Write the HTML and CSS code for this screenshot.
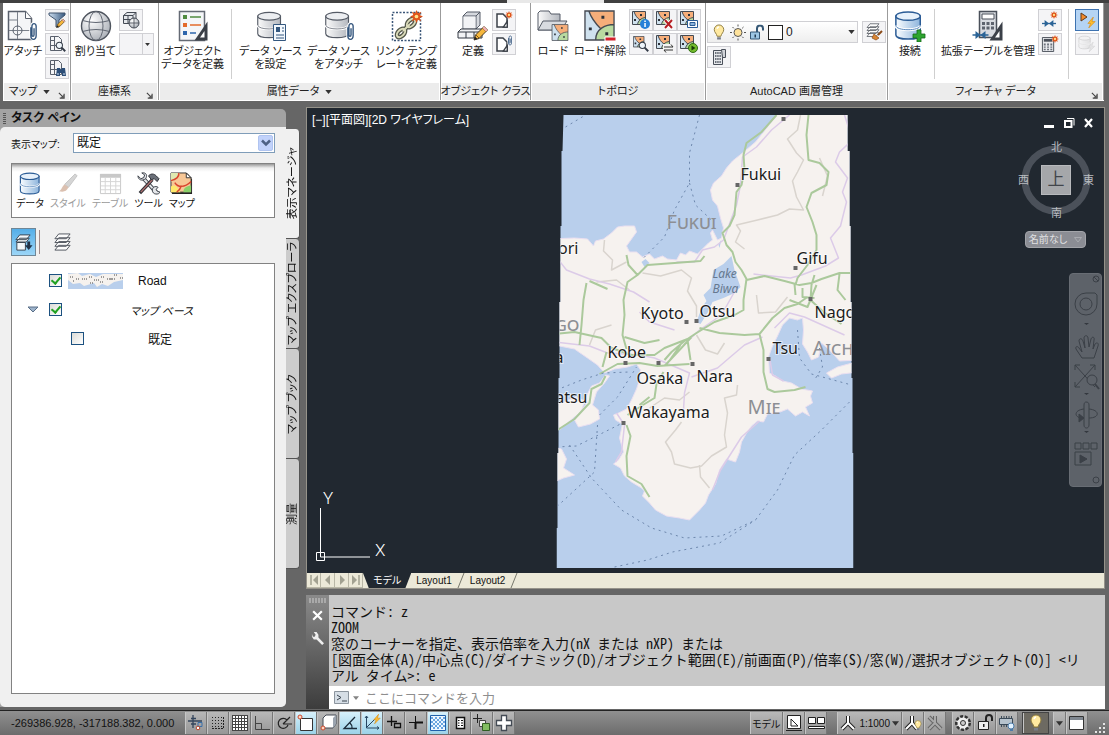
FILE: index.html
```html
<!DOCTYPE html>
<html lang="ja">
<head>
    <meta charset="UTF-8">
    <meta name="viewport" content="width=device-width, initial-scale=1.0">
    <title>AutoCAD Map</title>
    <link rel="stylesheet" href="styles.css">
</head>
<body>
    <!-- Shared icons -->
    <svg class="icon-defs" aria-hidden="true">
        <defs>
            <linearGradient id="metal" x1="0" x2="1" y1="0" y2="0">
                <stop offset="0" stop-color="#fafafa"/><stop offset="1" stop-color="#b4b8bf"/>
            </linearGradient>
            <linearGradient id="blue" x1="0" x2="1" y1="0" y2="0">
                <stop offset="0" stop-color="#fafdff"/><stop offset="1" stop-color="#8db4dc"/>
            </linearGradient>
            <linearGradient id="funnel" x1="0" x2="1" y1="0" y2="0">
                <stop offset="0" stop-color="#cfe0f2"/><stop offset="1" stop-color="#36587f"/>
            </linearGradient>
            <radialGradient id="ball" cx="0.35" cy="0.3" r="0.8">
                <stop offset="0" stop-color="#ffffff"/><stop offset="1" stop-color="#a6abb3"/>
            </radialGradient>
        </defs>

        <symbol id="doc" viewBox="0 0 32 32">
            <path d="M1.5 1.5h17l6 7v21h-23z" fill="#f4f5f7" stroke="#59606c" stroke-width="1.5"/>
            <path d="M18.5 1.5v7h6" fill="#fff" stroke="#59606c"/>
            <path d="M10.500 2v27M2 20.500h22M2 10h8" stroke="#7b818b" fill="none"/>
            <circle cx="10.500" cy="20.500" r="4.500" fill="none" stroke="#59606c"/>
        </symbol>
        <symbol id="clip" viewBox="0 0 8 18">
            <path d="M1.500 5v8a2.500 3.500 0 0 0 5 0V4a2 2.500 0 0 0-4 0v8a1 1.500 0 0 0 2 0V6" fill="none" stroke="#fff" stroke-width="3"/>
            <path d="M1.500 5v8a2.500 3.500 0 0 0 5 0V4a2 2.500 0 0 0-4 0v8a1 1.500 0 0 0 2 0V6" fill="none" stroke="#33557d" stroke-width="1.300"/>
        </symbol>
        <symbol id="pencil" viewBox="0 0 16 16">
            <path d="M1 15l1.500-5L11 1.500 14.500 5 6 13.500z" fill="#f6b73c" stroke="#4a3a22"/>
            <path d="M3 10l3 3M9.500 3l3.500 3.500" stroke="#7a5317" fill="none"/>
            <path d="M1 15l1-3.500L4.500 14z" fill="#222"/>
            <path d="M11 1.500L14.500 5l-1.500 1.500L9.500 3z" fill="#f4b2b8"/>
        </symbol>
        <symbol id="star" viewBox="0 0 12 12">
            <path d="M6 0l1.300 3 3-1.300L9 4.700 12 6 9 7.300l1.300 3-3-1.300L6 12 4.700 9l-3 1.300L3 7.300 0 6l3-1.300L1.700 1.700l3 1.300z" fill="#e0541a"/>
            <circle cx="6" cy="6" r="1.700" fill="#ffe08a"/>
        </symbol>
        <symbol id="lens" viewBox="0 0 14 14">
            <path d="M8.500 8.500l4.500 4.500" stroke="#333b47" stroke-width="2.500"/>
            <circle cx="5.500" cy="5.500" r="4" fill="#eef5fb" stroke="#333b47" stroke-width="1.300"/>
        </symbol>
        <symbol id="db" viewBox="0 0 32 32">
            <path d="M2 6v20c0 6 26 6 26 0V6z" fill="url(#metal)" stroke="#555b66" stroke-width="1.300"/>
            <path d="M2 16c0 6 26 6 26 0" fill="none" stroke="#fff" stroke-width="3"/>
            <path d="M2 16c0 6 26 6 26 0" fill="none" stroke="#707680"/>
            <ellipse cx="15" cy="6" rx="13" ry="4.500" fill="#eceef1" stroke="#555b66" stroke-width="1.300"/>
        </symbol>
        <symbol id="db-blue" viewBox="0 0 32 32">
            <path d="M2 6v20c0 6 26 6 26 0V6z" fill="url(#blue)" stroke="#2b5c96" stroke-width="1.600"/>
            <path d="M2 16c0 6 26 6 26 0" fill="none" stroke="#fff" stroke-width="3"/>
            <path d="M2 16c0 6 26 6 26 0" fill="none" stroke="#4d7fb8"/>
            <ellipse cx="15" cy="6" rx="13" ry="4.500" fill="#e7f1fb" stroke="#2b5c96" stroke-width="1.600"/>
        </symbol>
        <symbol id="topo" viewBox="0 0 32 32">
            <path d="M1 1h30v30H1z" fill="#cfe1ee"/>
            <path d="M5 1h26v14l-14 4C13 15 8 10 5 1z" fill="#f6ae7a"/>
            <path d="M31 15v16H12c0-6 3-10 6-12s8-4 13-4z" fill="#b9dba0"/>
            <path d="M5 1c3 9 8 14 12 18M31 15c-8 0-19 4-19 16M1 1h30v30H1z" fill="none" stroke="#454a52" stroke-width="1.400"/>
            <path d="M18 6h3v3h-3zM5 18h3v3H5zM22 23h3v3h-3z" fill="#2c3038"/>
        </symbol>
        <symbol id="topo-small" viewBox="0 0 16 16">
            <path d="M.5.5h13v13H.5z" fill="#cfe1ee"/>
            <path d="M2 .5h11.500v6L8 9C5 7 3 4 2 .5z" fill="#f6ae7a"/>
            <path d="M13.500 6.500v7h-8C6 10 9 7 13.500 6.500z" fill="#b9dba0"/>
            <path d="M2 .5C3 4 5 7 8 9m5.500-2.500C9 7 6 10 5.500 13.500M.5.500h13v13H.5z" fill="none" stroke="#454a52"/>
            <path d="M8 3h2v2H8zM2 8h2v2H2z" fill="#2c3038"/>
        </symbol>
        <symbol id="calc" viewBox="0 0 16 16">
            <path d="M1.500.5h12v15h-12z" fill="#e7e9ec" stroke="#4a505a"/>
            <path d="M3 2h9v3H3z" fill="#4a505a"/>
            <path d="M3 7h2v2H3zm3.500 0h2v2h-2zM10 7h2v2h-2zM3 10h2v1.500H3zm3.500 0h2v1.500h-2zM10 10h2v1.500h-2zM3 12.500h2V14H3zm3.500 0h2V14h-2zm3.500 0h2V14h-2z" fill="#6a707a"/>
        </symbol>
        <symbol id="square-rule" viewBox="0 0 14 20">
            <path d="M13.500.5v19H.5z" fill="#3b4048"/><path d="M10.500 10v6.500H6z" fill="#fff"/>
        </symbol>
        <symbol id="bulb" viewBox="0 0 16 18">
            <path d="M8 1a5 5 0 0 0-5 5c0 3 2.500 4 3 7h4c.5-3 3-4 3-7a5 5 0 0 0-5-5z" fill="#ffe9a0" stroke="#8c7a3e"/>
            <path d="M6 5a3 3 0 0 1 2-2" stroke="#fff" stroke-width="1.500" fill="none"/>
            <path d="M6 14h4v2.500H6z" fill="#777d88"/>
        </symbol>
        <symbol id="layers" viewBox="0 0 20 20">
            <path d="M6 13h12l-4 5H2zM6 9h12l-4 5H2zM6 5h12l-4 5H2zM6 1h12l-4 5H2z" fill="#fbfbfb" stroke="#50555e"/>
        </symbol>
        <symbol id="arrows" viewBox="0 0 16 8">
            <path d="M0 4h16" stroke="#2b6497" stroke-width="1.500"/><path d="M3 0l5 4-5 4zM13 0L8 4l5 4z" fill="#2b6497"/>
        </symbol>
        <symbol id="bolt" viewBox="0 0 10 12">
            <path d="M7 0L1 7h3l-2 5 7-7H5.500z" fill="#ffbf2e" stroke="#d78610" stroke-width=".7"/>
        </symbol>
        <symbol id="lock-open" viewBox="0 0 16 16">
            <path d="M8 8V4a3 3 0 0 1 6 0v2" fill="none" stroke="#345775" stroke-width="2"/>
            <path d="M1.500 7.500h9v7h-9z" fill="#9cc6e4" stroke="#345775"/><path d="M5.500 10h1.500v3H5.500z" fill="#213b52"/>
        </symbol>
        <symbol id="launcher" viewBox="0 0 8 8">
            <path d="M1 1l4 4M7 2v5H2" fill="none" stroke="#444" stroke-width="1.300"/><path d="M3 6.500L6.500 3v3.500z" fill="#444"/>
        </symbol>
        <symbol id="down" viewBox="0 0 8 5"><path d="M0 0h8L4 5z" fill="#333"/></symbol>
    </svg>

    <div class="title-strip"><span></span></div>

    <!-- Ribbon -->
    <header class="ribbon">
        <section class="panel">
            <div class="panel-body">
                <button class="big">
                    <svg viewBox="0 0 32 32"><use href="#doc" width="32" height="32"/><use href="#clip" x="22" y="12" width="9" height="19"/></svg>
                    アタッチ
                </button>
                <div class="stack">
                    <button class="small" aria-label="フィルタ"><svg viewBox="0 0 18 18"><path d="M1 2h16v2l-6 5v7H8V9L1 4z" fill="url(#funnel)" stroke="#40556f"/><use href="#pencil" x="8" y="7" width="10" height="10"/></svg></button>
                    <button class="small" aria-label="検索"><svg viewBox="0 0 18 18"><path d="M2.500 1.500h8l3 3v11h-11z" fill="#f4f5f7" stroke="#59606c"/><path d="M6.500 2v13M3 5.500h3M3 10.500h10" stroke="#59606c"/><use href="#lens" x="7" y="6" width="11" height="11"/></svg></button>
                    <button class="small" aria-label="表示"><svg viewBox="0 0 18 18"><path d="M2.500 1.500h8l3 3v11h-11z" fill="#f4f5f7" stroke="#59606c"/><path d="M6.500 2v13M3 5.500h3M3 10.500h10" stroke="#59606c"/><path d="M8 17l1-8h3l1 2 1-2h3l1 8h-4v-3h-2v3z" fill="#2c4e78"/><path d="M9.500 14h1v2h-1zM15.500 14h1v2h-1z" fill="#cfe0f2"/></svg></button>
                </div>
            </div>
            <h2>マップ <svg class="down"><use href="#down"/></svg><button class="launcher" aria-label="マップの設定"><svg><use href="#launcher"/></svg></button></h2>
        </section>

        <section class="panel">
            <div class="panel-body">
                <button class="big">
                    <svg viewBox="0 0 32 32"><circle cx="16" cy="16" r="14.500" fill="url(#ball)" stroke="#4e545e" stroke-width="1.400"/><ellipse cx="16" cy="16" rx="7" ry="14.500" fill="none" stroke="#626873"/><path d="M2.500 10.500q13.500 4 27 0M2.500 21.500q13.500-4 27 0" stroke="#626873" fill="none"/></svg>
                    割り当て
                </button>
                <div class="stack">
                    <button class="small" aria-label="座標系"><svg viewBox="0 0 18 18"><path d="M1.500 4.500L5 1.500h9v8l-3 3H1.500z" fill="#e3e6ea" stroke="#444a54"/><path d="M1.500 4.500H11l3-3M11 4.500v8M1.500 8.500H11M6 4.500v8" fill="none" stroke="#444a54"/><circle cx="12" cy="12" r="5" fill="url(#ball)" stroke="#444a54"/><path d="M7 12h10M12 7v10" stroke="#444a54" stroke-width=".8"/></svg></button>
                    <div class="mini-select"><select aria-label="座標系の選択"><option> </option></select><svg class="down"><use href="#down"/></svg></div>
                </div>
            </div>
            <h2>座標系 <button class="launcher" aria-label="座標系の設定"><svg><use href="#launcher"/></svg></button></h2>
        </section>

        <section class="panel">
            <div class="panel-body wide">
                <button class="big">
                    <svg viewBox="0 0 32 32"><path d="M2.500 1.500h25v29h-25z" fill="#f4f6f8" stroke="#646a74" stroke-width="1.500"/><path d="M6 5h4v4H6z" fill="#508b41"/><path d="M6 13h4v4H6z" fill="#e36b2c"/><path d="M6 21h4v4H6z" fill="#2e66ac"/><path d="M13 7h11" stroke="#508b41" stroke-width="1.500"/><path d="M13 15h11" stroke="#e36b2c" stroke-width="1.500"/><path d="M13 23h6" stroke="#2e66ac" stroke-width="1.500"/><use href="#square-rule" x="17" y="11" width="14" height="20"/></svg>
                    オブジェクト<br>データを定義
                </button>
                <span class="divider"></span>
                <button class="big">
                    <svg viewBox="0 0 32 32"><use href="#db" x="1" width="28" height="30"/><path d="M18.500 14.500h12v16h-12z" fill="#f3f8fd" stroke="#33577f"/><path d="M21 17h4v5h-4z" fill="#33577f"/><path d="M27 18h2M27 21h2M21 25h8M21 28h8" stroke="#33577f"/></svg>
                    データ ソース<br>を設定
                </button>
                <button class="big">
                    <svg viewBox="0 0 32 32"><use href="#db" x="1" width="28" height="30"/><use href="#clip" x="23" y="12" width="9" height="19"/></svg>
                    データ ソース<br>をアタッチ
                </button>
                <button class="big">
                    <svg viewBox="0 0 32 32"><path d="M1.500 2.500h28v28h-28z" fill="none" stroke="#3b5678" stroke-width="1.500" stroke-dasharray="2 1.500"/><g fill="none" stroke="#53574a" stroke-width="4.500"><ellipse cx="10" cy="23" rx="5" ry="3" transform="rotate(-45 10 23)"/><ellipse cx="20" cy="13" rx="5" ry="3" transform="rotate(-45 20 13)"/><path d="M12 21l7-7"/></g><g fill="none" stroke="#dcdcbb" stroke-width="2"><ellipse cx="10" cy="23" rx="5" ry="3" transform="rotate(-45 10 23)"/><ellipse cx="20" cy="13" rx="5" ry="3" transform="rotate(-45 20 13)"/><path d="M12 21l7-7"/></g><use href="#star" x="19" y="0" width="13" height="13"/></svg>
                    リンク テンプ<br>レートを定義
                </button>
            </div>
            <h2>属性データ <svg class="down"><use href="#down"/></svg></h2>
        </section>

        <section class="panel">
            <div class="panel-body tight">
                <button class="big">
                    <svg viewBox="0 0 32 32"><path d="M6 6l4-4h13v13l-4 4H6z" fill="#d5d8dd" stroke="#555b66"/><path d="M6 6h13l4-4M19 6v13" fill="none" stroke="#555b66"/><path d="M6.500 6.500h12v12h-12z" fill="#f2f3f5"/><path d="M1 22l3-3h24l-3 3v6H1z" fill="#f2f3f5" stroke="#333942"/><path d="M1 22h24M9 22v6M17 22v6" stroke="#333942"/><use href="#pencil" x="16" y="15" width="16" height="16"/></svg>
                    定義
                </button>
                <div class="stack">
                    <button class="small" aria-label="新規クラス"><svg viewBox="0 0 18 18"><path d="M2 3h6l4 4v9H2z" fill="#fff" stroke="#3b4048" stroke-width="1.500"/><use href="#square-rule" x="6" y="8" width="8" height="9"/><use href="#star" x="10" y="0" width="8" height="8"/></svg></button>
                    <button class="small" aria-label="クラスをアタッチ"><svg viewBox="0 0 18 18"><path d="M2 3h6l4 4v9H2z" fill="#fff" stroke="#3b4048" stroke-width="1.500"/><use href="#square-rule" x="6" y="8" width="8" height="9"/><use href="#clip" x="12" y="0" width="6" height="11"/></svg></button>
                </div>
            </div>
            <h2>オブジェクト クラス</h2>
        </section>

        <section class="panel">
            <div class="panel-body">
                <button class="big">
                    <svg viewBox="0 0 32 32"><path d="M1 20V3l2-2h9l2 3h9v16z" fill="url(#metal)" stroke="#555b66"/><path d="M1 20l5-9h24l-6 9z" fill="#d8dbe0" stroke="#555b66"/><use href="#topo" x="14" y="14" width="18" height="17"/></svg>
                    ロード
                </button>
                <button class="big">
                    <svg viewBox="0 0 32 32"><use href="#topo" width="31" height="31"/><path d="M21 27h11v4H21z" fill="#d3222b" stroke="#fff"/></svg>
                    ロード解除
                </button>
                <div class="icon-grid">
                    <button class="small" aria-label="情報"><svg viewBox="0 0 18 18"><use href="#topo-small" width="16" height="16"/><circle cx="13" cy="13" r="5" fill="#2580d8"/><path d="M12.300 9.500h1.500v1.500h-1.500zM12.300 12h1.500v4h-1.500z" fill="#fff"/></svg></button>
                    <button class="small" aria-label="削除"><svg viewBox="0 0 18 18"><use href="#topo-small" width="16" height="16"/><path d="M9 9l7 8M16 9l-7 8" stroke="#fff" stroke-width="4"/><path d="M9 9l7 8M16 9l-7 8" stroke="#b51f24" stroke-width="2"/></svg></button>
                    <button class="small" aria-label="形状"><svg viewBox="0 0 18 18"><use href="#topo-small" width="16" height="16"/><path d="M7.500 9.500h10v7h-10z" fill="#fff" stroke="#2b5c96"/><path d="M10 11.500h5v3h-5z" fill="#8db4dc" stroke="#2b5c96"/></svg></button>
                    <button class="small" aria-label="検索"><svg viewBox="0 0 18 18"><use href="#topo-small" x="1" y="1" width="13" height="13"/><use href="#lens" x="6" y="6" width="11" height="11"/></svg></button>
                    <button class="small" aria-label="更新"><svg viewBox="0 0 18 18"><use href="#topo-small" width="16" height="16"/><path d="M7 9h11v9H7z" fill="#f4f4f4"/><path d="M8 12h9l-2-2.500M17 15H8l2 2.500" fill="none" stroke="#333"/></svg></button>
                    <button class="small" aria-label="実行"><svg viewBox="0 0 18 18"><use href="#topo-small" width="16" height="16"/><circle cx="13" cy="13" r="4.500" fill="#74bd2d" stroke="#2f6b14"/><path d="M11.500 10.500l4 2.500-4 2.500z" fill="#173a08"/></svg></button>
                </div>
            </div>
            <h2>トポロジ</h2>
        </section>

        <section class="panel">
            <div class="panel-body layers">
                <div class="layer-row">
                    <div class="layer-select">
                        <svg viewBox="0 0 16 18"><use href="#bulb" width="16" height="18"/></svg>
                        <svg viewBox="0 0 16 16"><circle cx="8" cy="8" r="4" fill="#ffe39b" stroke="#555"/><path d="M8 0v2M8 14v2M0 8h2M14 8h2M2.500 2.500l1.300 1.300M12.200 12.200l1.300 1.300M13.500 2.500l-1.300 1.300M3.800 12.200l-1.300 1.300" stroke="#555"/></svg>
                        <svg viewBox="0 0 16 16"><use href="#lock-open" width="16" height="16"/></svg>
                        <span class="swatch"></span>
                        <select aria-label="画層"><option>0</option></select>
                        <svg class="down"><use href="#down"/></svg>
                    </div>
                    <button class="small" aria-label="画層プロパティ"><svg viewBox="0 0 18 18"><use href="#layers" width="16" height="15"/><path d="M17 8l-4 4" stroke="#8a4a18" stroke-width="2"/><path d="M9 11l5 4-3 2-4-2z" fill="#d98532" stroke="#8a4a18" stroke-width=".7"/></svg></button>
                </div>
                <button class="small" aria-label="画層計算"><svg viewBox="0 0 18 18"><path d="M3.500 2.500h9v14h-9z" fill="#e7e9ec" stroke="#4a505a"/><path d="M5 5h6M5 8h6M5 11h6M5 14h6" stroke="#6a707a" stroke-width="2" stroke-dasharray="1.500 .7"/><path d="M11.500 1.500h4v8h-3z" fill="#d0d3d8" stroke="#4a505a"/></svg></button>
            </div>
            <h2>AutoCAD 画層管理</h2>
        </section>

        <section class="panel">
            <div class="panel-body">
                <button class="big">
                    <svg viewBox="0 0 32 32"><use href="#db-blue" width="30" height="31"/><path d="M23 20h4v4h4v4h-4v4h-4v-4h-4v-4h4z" fill="#2da52f" stroke="#14691a" stroke-width=".8"/></svg>
                    接続
                </button>
                <span class="divider"></span>
                <button class="big">
                    <svg viewBox="0 0 32 32"><path d="M7.500 1.500h17v26h-17z" fill="#d8dbe0" stroke="#4a505a" stroke-width="1.500"/><path d="M10 4h12v5H10z" fill="#fff" stroke="#4a505a"/><path d="M10 12h3v3h-3zm4.500 0h3v3h-3zm4.500 0h3v3h-3zm-9 4.500h3v3h-3zm4.500 0h3v3h-3zm4.500 0h3v3h-3z" fill="#5d636d"/><use href="#arrows" x="0" y="21" width="17" height="8"/><use href="#square-rule" x="17" y="11" width="14" height="20"/></svg>
                    拡張テーブルを管理
                </button>
                <div class="stack">
                    <button class="small" aria-label="結合を作成"><svg viewBox="0 0 18 18"><use href="#arrows" x="1" y="9" width="14" height="7"/><use href="#star" x="9" y="0" width="8" height="8"/></svg></button>
                    <button class="small" aria-label="計算を作成"><svg viewBox="0 0 18 18"><use href="#calc" x="0" y="2" width="15" height="15"/><use href="#star" x="10" y="0" width="8" height="8"/></svg></button>
                </div>
                <span class="divider"></span>
                <div class="stack">
                    <button class="small on" aria-label="自動更新"><svg viewBox="0 0 18 18"><path d="M3 2l6 4-6 4z" fill="#f48a2b" stroke="#60391a"/><use href="#bolt" x="9" y="6" width="9" height="11"/></svg></button>
                    <button class="small off" aria-label="同期" disabled><svg viewBox="0 0 18 18"><use href="#db" width="14" height="15"/><use href="#bolt" x="9" y="7" width="9" height="10"/></svg></button>
                </div>
            </div>
            <h2>フィーチャ データ <button class="launcher" aria-label="フィーチャの設定"><svg><use href="#launcher"/></svg></button></h2>
        </section>
    </header>

    <main class="workspace">
        <!-- Task pane -->
        <aside class="task-pane">
            <div class="pane">
                <h1><i></i>タスク ペイン</h1>
                <div class="pane-body">
                    <div class="map-field">
                        <label for="map-name">表示マップ:</label>
                        <div class="xp-select">
                            <select id="map-name"><option>既定</option></select>
                            <span><svg viewBox="0 0 10 8"><path d="M1 1.500l4 4 4-4" fill="none" stroke="#4d6185" stroke-width="2.500"/></svg></span>
                        </div>
                    </div>
                    <div class="pane-tools">
                        <button><svg viewBox="0 0 24 24"><use href="#db-blue" x="1" width="24" height="24"/></svg>データ</button>
                        <button disabled><svg viewBox="0 0 24 24"><path d="M20 2l2 2-9 12-4-3z" fill="#999" stroke="#666"/><path d="M9 13l4 3c-2 5-6 5-10 4 3-1 3-5 6-7z" fill="#a8643c"/></svg>スタイル</button>
                        <button disabled><svg viewBox="0 0 24 24"><path d="M1.500 2.500h21v20h-21z" fill="#fff" stroke="#777"/><path d="M1 2h22v4H1z" fill="#777"/><path d="M6.500 6v16M12 6v16M17.500 6v16M2 10h20M2 14.500h20M2 18.500h20" stroke="#999"/></svg>テーブル</button>
                        <button><svg viewBox="0 0 24 24"><path d="M6 6l14 15" stroke="#3b4048" stroke-width="4"/><path d="M6 6l14 15" stroke="#e5e7ea" stroke-width="2"/><path d="M1 4l3 3 3-1 1-3-3-2c5-1 6 3 4 6-4 3-8 1-8-3zM16 19c0-3 3-5 6-3l-2 2 1 2 3 1c-1 3-8 3-8-2z" fill="#e5e7ea" stroke="#3b4048"/><path d="M3 22l13-14" stroke="#2e3036" stroke-width="3.500"/><path d="M4 21L16 8" stroke="#b07070" stroke-width="1.500"/><path d="M12 4c3-3 6-2 8 0l3 3-2 3-3-3-3 1z" fill="#6a6f78" stroke="#2a2d33"/></svg>ツール</button>
                        <button><svg viewBox="0 0 24 24"><path d="M2 2h17v5h4v16H2z" fill="#222"/><path d="M1 1h16l5 5v15H1z" fill="#f7c796" stroke="#333"/><path d="M1 1h9c-1 6-6 8-9 9z" fill="#dfe9b0"/><path d="M14 21c0-5 3-6 8-7v7z" fill="#8ad06a"/><path d="M1 15c5-3 7 2 10 6H1z" fill="#ffe96b"/><path d="M9 1c1 4-3 7-8 8m4 2c3 5 10 6 17-1M12 14c-1 3-2 5-5 7" fill="none" stroke="#d8452e" stroke-width="1.500"/><path d="M17 1v5h5z" fill="#fff" stroke="#333"/></svg>マップ</button>
                    </div>
                    <div class="view-tools">
                        <button class="on" aria-label="描画順序"><svg viewBox="0 0 20 20"><path d="M6 2h11l-4 5H2zM6 5.500h10l-3 4H2z" fill="#f4f8fb" stroke="#38424e"/><path d="M3 10h9v8H3z" fill="#f4f8fb" stroke="#38424e"/><path d="M14 9h3v4h2.500L15.500 18 11.500 13H14z" fill="#213348"/></svg></button>
                        <span></span>
                        <button aria-label="グループ"><svg viewBox="0 0 20 20"><use href="#layers" width="20" height="20"/></svg></button>
                    </div>
                    <ul class="layer-list">
                        <li>
                            <input type="checkbox" id="layer-road" checked>
                            <svg class="thumb" viewBox="0 0 55 16" preserveAspectRatio="none"><path d="M0 0h55v16H0z" fill="#b9cfec"/><path d="M0 1l10-1 4 3 8-2 6 3 7-3h20v6l-9 2-6 4-6-2-5 3-3-4-10 3-4-3-7 1-5-4z" fill="#f6f2ee"/><path d="M2 4h4m2 2h3m3 0h5m2-2h3m2 3h5m2-3h4m2 2h5m2-4h3m3 3h4M5 8h2m15 2h3m7-1h4m6-3h5" stroke="#464646" stroke-dasharray="1 1"/></svg>
                            <label for="layer-road">Road</label>
                        </li>
                        <li>
                            <button class="toggle" aria-label="折りたたむ"><svg viewBox="0 0 12 7"><path d="M1 1h10L6 6z" fill="#9db3cb" stroke="#5a6f88"/></svg></button>
                            <input type="checkbox" id="layer-base" checked>
                            <label for="layer-base" class="base">マップ ベース</label>
                        </li>
                        <li class="child">
                            <input type="checkbox" id="layer-default">
                            <label for="layer-default">既定</label>
                        </li>
                    </ul>
                </div>
            </div>
            <nav class="side-tabs">
                <button class="active"><span>表示マネージャ</span></button>
                <button><span>マップ エクスプローラ</span></button>
                <button><span>マップ ブック</span></button>
                <button><span>測量</span></button>
            </nav>
        </aside>

        <div class="editor">
            <section class="drawing-window">
                <div class="canvas">
                    <svg class="map" viewBox="556 115 300 454">
                        <defs><clipPath id="sheet"><path d="M564 115h284v36h2v75h1v76h1v76h1v75h1v115H557v-40h1v-75h1v-75h1v-76h1v-76h1v-75h1z"/></clipPath></defs>
                        <g clip-path="url(#sheet)">
                            <path class="sea" d="M550 110h310v465H550z"/>
                            <g class="land">
                                <path d="M779 113L768 127 756 142 743 153 733 161 727 168 722 176 714 183 711 190 713 200 718 206 721 218 724 228 722 238 718 240 713 230 711 233 713 240 709 243 702 250 698 254 690 251 686 255 681 253 677 260 668 259 663 256 655 259 650 254 643 257 637 252 630 252 627 246 632 239 637 232 635 226 625 226 618 227 612 233 604 239 596 241 594 246 588 239 575 238 550 239 550 344 575 349 588 358 598 365 605 373 615 369 628 367 637 364 641 370 640 380 637 389 632 400 627 409 619 413 614 415 616 420 623 424 620 438 624 452 619 460 614 464 621 468 625 476 632 482 642 488 645 491 643 496 650 503 656 510 667 516 680 518 690 520 700 510 706 503 709 495 716 484 720 470 727 459 736 462 740 452 742 442 747 433 752 426 758 421 764 422 768 414 778 413 788 409 796 416 803 412 810 416 806 407 813 403 811 396 813 391 802 389 792 383 783 381 776 376 770 373 769 357 773 346 778 336 783 325 790 318 798 320 803 318 804 330 803 344 808 352 812 360 819 357 822 343 830 350 840 361 860 360 860 110z"/>
                                <path d="M827 373L838 367 860 361 860 372 842 374 832 378zM606 375L600 383 592 386 586 398 582 411 575 420 579 427 591 424 600 419 599 410 593 405 597 392 605 383 610 376zM550 402L562 403 576 397 588 402 580 413 570 421 561 429 550 433zM550 446L562 449 567 459 564 468 575 475 564 478 557 481 550 480z"/>
                            </g>
                            <path class="sea" d="M732 256L735 270 741 287 735 293 724 298 713 302 708 313 701 324 697 322 702 308 707 301 704 295 711 288 714 270 724 264zM719 245L722 239 720 248zM646 259L650 263 645 267 642 262z"/>
                            <g class="border">
                                <path d="M801 115L798 130 788 139 797 153 804 160 798 172 793 181 797 197 804 210 790 209 778 215 758 220 737 225 741 231 736 242 745 249M605 240L604 251 613 260 612 270 627 262M643 273L661 276 682 270 692 278 688 291 697 306 697 317M757 295L759 313 776 312 788 297M697 335L706 350 718 354 725 343M650 408L665 398 680 400 690 392M738 385L737 395 725 398 728 413 725 435 727 447 712 456 702 466 691 468 675 464 672 452 666 442 676 430 682 422M700 465L701 477 710 488M630 290L617 280 597 282M820 158L828 176 823 196M590 345L596 330 612 325"/>
                            </g>
                            <g class="minor">
                                <path d="M790 115L772 130 757 147 743 157 741 185 737 205 724 240 715 247 703 250 695 262 677 262M845 115L853 140 840 152 836 162 848 178 843 192 847 202 841 226 831 238 839 258 826 266 802 275 791 278 754 274M556 256L567 270 590 279 610 284 634 292 650 302M736 290L722 315 700 330 684 345M556 342L590 346 608 353 640 355 655 358 690 373 685 393 684 410M845 335L805 317 790 313 775 328M763 337L745 345 732 356 718 368 692 377M617 413L625 425 622 452 616 462M713 490L721 470 742 437 760 421M770 357L773 375 784 381M640 312L650 322 675 330"/>
                            </g>
                            <g class="road">
                                <path d="M777 115L762 132 747 143 744 155 745 170 742 185 737 192 735 215 730 226 723 233 727 245 733 252 736 262 742 270 747 279 744 300 744 310 735 315 715 322 697 333 685 341 672 352 665 360M747 280L765 276 785 281 800 285 812 283 822 279 840 273 856 273M809 115L807 135 809 160 820 163 829 172 827 185 812 193 807 207 813 222 817 235 817 250 808 265 798 278 796 285M627 255L629 265 638 275 628 282 624 300 625 315 623 335 627 349M638 275L648 265 675 263 701 261 705 256M587 283L584 300 582 325 580 345M590 281L608 289M556 334L575 332 602 338 612 348 632 355 655 355 665 348 688 339M600 374L618 364 640 363 658 366 690 364M700 328L720 333 745 335 760 334 773 318 785 308 798 304 808 297M760 334L764 350 764 372 768 389 775 392 795 390 806 387M664 372L657 384 655 398 645 404 628 415M627 425L631 436 627 456 628 476 642 484 650 497M606 376L602 384 592 389 590 403 575 419 558 430M815 275L812 285 811 300 824 312 842 324M840 274L838 290 846 300M803 288L803 297 815 298M795 284L796 295M665 366L680 350 692 337M681 345L669 362M688 340L691 360M625 337L645 343 660 340M607 352L603 367M650 397L640 405M790 300L808 307 817 285"/>
                            </g>
                            <path class="ferry" d="M700 115L690 153V183L675 210 665 237 642 260M690 183L696 205 712 220M566 127L586 115M557 390L582 380 604 373 630 372M557 447L577 446 599 435 623 423M598 425L595 472 557 507M600 415L618 397 637 367M570 445L592 478 622 510 652 528 685 538 722 536 756 520 778 490 795 455 822 430 850 402M615 567L648 560 673 552 720 543 756 520M798 330L800 358 812 374 852 385M820 348L823 367 815 380"/>
                            <path class="town" d="M736 183h4v4h-4zM782 117h4v4h-4zM794 266h4v4h-4zM685 320h4v4h-4zM695 319h4v4h-4zM809 297h4v4h-4zM624 361h4v4h-4zM657 361h4v4h-4zM691 362h4v4h-4zM767 357h4v4h-4zM622 421h4v4h-4z"/>
                            <g class="prefecture">
                                <text x="667" y="229">Fukui</text><text x="748" y="414">Mie</text>
                                <text x="813" y="355">Aichi</text><text x="580" y="331" text-anchor="end">Hyogo</text>
                            </g>
                            <g class="city">
                                <text x="741" y="180">Fukui</text><text x="797" y="264">Gifu</text>
                                <text x="641" y="319">Kyoto</text><text x="700" y="317">Otsu</text>
                                <text x="815" y="318">Nagoya</text><text x="608" y="358">Kobe</text>
                                <text x="773" y="354">Tsu</text><text x="637" y="384">Osaka</text>
                                <text x="697" y="382">Nara</text><text x="628" y="418">Wakayama</text>
                                <text x="579" y="254" text-anchor="end">Tottori</text>
                                <text x="588" y="403" text-anchor="end">Takamatsu</text>
                                <text x="564" y="363" text-anchor="end">Okayama</text>
                            </g>
                            <g class="lake"><text x="713" y="278">Lake</text><text x="713" y="293">Biwa</text></g>
                        </g>
                    </svg>
                    <p class="view-label">[−][平面図][2D ワイヤフレーム]</p>
                    <div class="window-buttons">
                        <button aria-label="最小化"><svg viewBox="0 0 12 12"><path d="M1 8h10v3H1z" fill="#fff"/></svg></button>
                        <button aria-label="元に戻す"><svg viewBox="0 0 12 12"><path d="M4 1.500h7v7" fill="none" stroke="#fff"/><path d="M2 4h6.500v6H2z" fill="none" stroke="#fff" stroke-width="2"/></svg></button>
                        <button aria-label="閉じる"><svg viewBox="0 0 12 12"><path d="M2 2l7 8M9 2l-7 8" stroke="#fff" stroke-width="2.200"/></svg></button>
                    </div>
                    <div class="compass">
                        <svg viewBox="0 0 80 80"><circle cx="40" cy="40" r="31" fill="none" stroke="#4b515a" stroke-width="7"/></svg>
                        <span class="north">北</span><span class="east">東</span><span class="south">南</span><span class="west">西</span>
                        <button>上</button>
                    </div>
                    <button class="ucs-name">名前なし <svg viewBox="0 0 8 6"><path d="M.5.5h7L4 5z" fill="none" stroke="#a9abb0"/></svg></button>
                    <div class="nav-bar">
                        <svg viewBox="0 0 31 212">
                            <g fill="none" stroke="#3b4047">
                                <circle cx="26" cy="5" r="3"/><path d="M24 3l4 4"/>
                                <path d="M16 19a11 11 0 1 0 11 11v-9l-2-2z"/><circle cx="16" cy="30" r="6"/>
                                <path d="M12 84l-6-9c-1-3 2-3 3-1l3 4-3-11c0-3 3-3 4 0l2 7-1-10c0-3 4-3 4 0l1 9 2-8c1-3 4-2 3 1l-1 9 2-5c2-2 4-1 3 2l-4 12z"/>
                                <path d="M5 91l20 22M25 91L5 113M5 96v-5h5M20 91h5v5M5 108v5h5"/><circle cx="22" cy="106" r="5" fill="#5d6269"/><path d="M25 110l4 5" stroke-width="2"/>
                                <path d="M16 128c2 0 3 1 3 3v20c0 4-5 4-5 0v-20c0-2 1-3 2-3zM19 135c11 1 11 9 0 9M14 135c-10 1-10 8-3 9"/><path d="M9 140l5 4-5 4z" fill="#3b4047"/>
                                <path d="M5 169h6v6H5zM13 169h6v6h-6zM21 169h6v6h-6zM5 178h16v13H5z"/><path d="M10 181l7 4-7 4z" fill="#3b4047"/>
                                <circle cx="26" cy="206" r="3"/>
                            </g>
                            <path d="M14 49h5l-2.500 2zM14 119h5l-2.500 2zM14 157h5l-2.500 2z" fill="#34383f"/>
                        </svg>
                    </div>
                    <svg class="ucs-icon" viewBox="0 0 80 76"><path d="M6.500 19v49H56M2.500 63.500h8v8h-8z" fill="none" stroke="#fff"/><text x="9" y="15">Y</text><text x="61" y="67">X</text></svg>
                </div>
                <nav class="layout-tabs">
                    <button class="step" aria-label="最初"><svg viewBox="0 0 10 10"><path d="M2 0v10" stroke="#a2a191" stroke-width="1.500"/><path d="M9 0v10L4 5z" fill="#a2a191"/></svg></button>
                    <button class="step" aria-label="前"><svg viewBox="0 0 10 10"><path d="M7 0v10L2 5z" fill="#a2a191"/></svg></button>
                    <button class="step" aria-label="次"><svg viewBox="0 0 10 10"><path d="M3 0v10l5-5z" fill="#a2a191"/></svg></button>
                    <button class="step" aria-label="最後"><svg viewBox="0 0 10 10"><path d="M1 0v10l5-5z" fill="#a2a191"/><path d="M8 0v10" stroke="#a2a191" stroke-width="1.500"/></svg></button>
                    <button class="sheet active">モデル</button>
                    <button class="sheet">Layout1</button>
                    <svg class="slant" viewBox="0 0 8 15"><path d="M7 0L1 15" stroke="#77776c"/></svg>
                    <button class="sheet">Layout2</button>
                    <svg class="slant" viewBox="0 0 8 15"><path d="M7 0L1 15" stroke="#77776c"/></svg>
                </nav>
            </section>

            <section class="command">
                <div class="command-side">
                    <i></i>
                    <button aria-label="閉じる"><svg viewBox="0 0 12 12"><path d="M2 2l8 8M10 2l-8 8" stroke="#fff" stroke-width="2"/></svg></button>
                    <button aria-label="カスタマイズ"><svg viewBox="0 0 14 14"><path d="M1 2v3l2 3h3l6 6 2-2-6-6V3L6 0H3l2 3-1 2H2z" fill="#eee"/></svg></button>
                </div>
                <div class="command-main">
                    <div class="history">
                        <p>コマンド: z</p>
                        <p>ZOOM</p>
                        <p>窓のコーナーを指定、表示倍率を入力(nX または nXP) または</p>
                        <p>[図面全体(A)/中心点(C)/ダイナミック(D)/オブジェクト範囲(E)/前画面(P)/倍率(S)/窓(W)/選択オブジェクト(O)] &lt;リ</p>
                        <p>アル タイム&gt;: e</p>
                    </div>
                    <div class="prompt">
                        <button aria-label="最近使用したコマンド"><svg viewBox="0 0 16 13"><path d="M.5.5h14v12H.5z" fill="#d6dee6" stroke="#8c959e"/><path d="M3 4l4 2.500L3 9M8 10h5" fill="none" stroke="#39434d"/></svg><svg class="down"><use href="#down"/></svg></button>
                        <input type="text" aria-label="コマンド" placeholder="ここにコマンドを入力">
                    </div>
                </div>
            </section>
        </div>
    </main>

    <!-- Status bar -->
    <footer class="status">
        <span class="coords">-269386.928, -317188.382, 0.000</span>
        <div class="status-group">
            <button aria-label="推定"><svg viewBox="0 0 18 18"><path d="M6 1v13M1 7h14M4 4.500h5M4 10h5" stroke="#34455c" stroke-width="1.300"/><path d="M11 8.500h4v4h-4z" fill="none" stroke="#3a6fa8"/><circle cx="11" cy="14" r="1.800" fill="#fff" stroke="#b9462c"/></svg></button>
            <button aria-label="スナップ"><svg viewBox="0 0 18 18"><path d="M3 3.500h12M3 6.500h12M3 9.500h12M3 12.500h12" stroke="#222" stroke-dasharray="1 2"/><path d="M14.500 3v12M3 14.500h12" stroke="#222" stroke-dasharray="2 1"/></svg></button>
            <button aria-label="グリッド"><svg viewBox="0 0 18 18"><path d="M1.500 1.500h15v15h-15z" fill="#fff"/><path d="M1.500 1v16M4.500 1v16M7.500 1v16M10.500 1v16M13.500 1v16M16.500 1v16M1 1.500h16M1 4.500h16M1 7.500h16M1 10.500h16M1 13.500h16M1 16.500h16" stroke="#444"/></svg></button>
            <button aria-label="直交"><svg viewBox="0 0 18 18"><path d="M2.500 2v13.500H17M2.500 9.500h6v6" fill="none" stroke="#444"/></svg></button>
            <button aria-label="極"><svg viewBox="0 0 18 18"><path d="M13 11a5 5 0 1 1-1-5M8 10h9M8 10l7-7" fill="none" stroke="#222" stroke-width="1.200"/></svg></button>
            <button class="on" aria-label="オブジェクト スナップ"><svg viewBox="0 0 18 18"><path d="M3.500 4.500h12v12h-12z" fill="#fff" stroke="#333"/><circle cx="3" cy="3" r="2" fill="#ffd8c4" stroke="#c9482d"/></svg></button>
            <button aria-label="3D スナップ"><svg viewBox="0 0 18 18"><path d="M4 4l3-3h10v9l-3 4H4z" fill="#fff" stroke="#444b55"/><path d="M14 4l3-3v9l-3 4z" fill="#9ba4af"/><circle cx="4" cy="14" r="2" fill="#ffd8c4" stroke="#c9482d"/></svg></button>
            <button class="on" aria-label="トラッキング"><svg viewBox="0 0 18 18"><path d="M14 3L3 14.500h13M9 9a6 6 0 0 1 2 5" fill="none" stroke="#1c2c3a" stroke-width="1.300"/></svg></button>
            <button class="on" aria-label="ダイナミック UCS"><svg viewBox="0 0 18 18"><path d="M3.500 2v12H16M3 14L13 4M2 4l1.500-2L5 4M14 12.500l2 1.500-2 1.500" fill="none" stroke="#274661"/><use href="#bolt" x="10" y="0" width="8" height="10"/></svg></button>
            <button aria-label="ダイナミック入力"><svg viewBox="0 0 18 18"><path d="M6.500 2v10M2 7.500h10M9.500 9.500h6v4h-6z" fill="none" stroke="#111" stroke-width="1.300"/></svg></button>
            <button aria-label="線の太さ"><svg viewBox="0 0 18 18"><path d="M2 8.500h7M8.500 2v6" stroke="#111"/><path d="M8.500 8v7M8 8.500h8" stroke="#111" stroke-width="2"/></svg></button>
            <button class="on" aria-label="透過性"><svg viewBox="0 0 18 18"><path d="M1.500 1.500h15v15h-15z" fill="#edf7ff" stroke="#1f60aa"/><path d="M2 4h14M2 8h14M2 12h14" stroke="#69a5df" stroke-width="2" stroke-dasharray="2 2"/><path d="M4 6h12M4 10h12M4 14h12" stroke="#69a5df" stroke-width="2" stroke-dasharray="2 2"/></svg></button>
            <button aria-label="クイック プロパティ"><svg viewBox="0 0 18 18"><path d="M5.500 3.500h8v11h-8z" fill="#fff" stroke="#111" stroke-width="1.500"/><path d="M7 6.500h1.500M10 6.500h2M7 9h1.500M10 9h2M7 11.500h1.500M10 11.500h2" stroke="#111"/></svg></button>
            <button aria-label="選択の循環"><svg viewBox="0 0 18 18"><path d="M4.500 0v9M0 4.500h9" stroke="#222"/><path d="M6.500 6.500h6v6h-6z" fill="#eee" stroke="#444"/><path d="M9.500 9.500h7v7h-7z" fill="#82bd61" stroke="#315f22"/></svg></button>
            <button aria-label="注釈モニター"><svg viewBox="0 0 18 18"><path d="M6.500 1.500h5v5h5v5h-5v5h-5v-5h-5v-5h5z" fill="#fff" stroke="#444b55" stroke-width="1.300"/></svg></button>
        </div>
        <div class="status-right">
            <div class="status-group">
                <button class="text">モデル</button>
                <button aria-label="レイアウト"><svg viewBox="0 0 18 18"><path d="M2.500 1.500h13v13h-13zM1 16.500h16" fill="#fff" stroke="#222"/><path d="M6 5v7h7z" fill="none" stroke="#222"/></svg></button>
                <button aria-label="クイックビュー"><svg viewBox="0 0 18 18"><path d="M1.500 3.500h7v6h-7zM10.500 3.500h7v6h-7zM1.500 12.500h16v2h-16z" fill="#fff" stroke="#222"/></svg></button>
            </div>
            <div class="status-group scale">
                <button class="text"><svg viewBox="0 0 18 18"><path d="M9 2v7l-6 6M9 9l6 6" fill="none" stroke="#222" stroke-width="4"/><path d="M9 2v7l-6 6M9 9l6 6" fill="none" stroke="#fff" stroke-width="2"/></svg>1:1000<svg class="down"><use href="#down"/></svg></button>
                <button aria-label="注釈の表示"><svg viewBox="0 0 18 18"><path d="M8 2v7l-6 6M8 9l5 6" fill="none" stroke="#222" stroke-width="4"/><path d="M8 2v7l-6 6M8 9l5 6" fill="none" stroke="#fff" stroke-width="2"/><use href="#bulb" x="9" y="6" width="10" height="11"/></svg></button>
                <button aria-label="自動追加"><svg viewBox="0 0 18 18"><path d="M9 2v7l-6 6M9 9l6 6M3 3l5 5" fill="none" stroke="#666" stroke-width="4"/><path d="M9 2v7l-6 6M9 9l6 6M3 3l5 5" fill="none" stroke="#aaa" stroke-width="2"/></svg></button>
            </div>
            <div class="status-group">
                <button aria-label="ワークスペース"><svg viewBox="0 0 18 18"><circle cx="9" cy="9" r="6.500" fill="#eee" stroke="#333" stroke-width="3" stroke-dasharray="3 1.500"/><circle cx="9" cy="9" r="5.500" fill="#eee"/><circle cx="9" cy="9" r="2.500" fill="#ccc" stroke="#333"/></svg></button>
                <button aria-label="ロック"><svg viewBox="0 0 18 18"><path d="M10 8V4a3 3 0 0 1 6 0v3" fill="none" stroke="#222" stroke-width="2"/><path d="M2.500 7.500h10v8h-10z" fill="#eee" stroke="#222"/><path d="M7 10h1.500v3H7z" fill="#222"/></svg></button>
                <button aria-label="ハードウェア"><svg viewBox="0 0 18 18"><path d="M1.500 4.500h13v6h-13z" fill="#b7c3cd" stroke="#3b4a58"/><path d="M3 3h11M3 12h8" stroke="#3b4a58" stroke-width="2" stroke-dasharray="1 1.500"/><circle cx="13" cy="12" r="3" fill="#e2f2ff" stroke="#4c7ba8"/><path d="M12 16h3" stroke="#4c7ba8" stroke-width="2"/></svg></button>
                <button class="pressed" aria-label="オブジェクト選択表示"><svg viewBox="0 0 18 18"><use href="#bulb" x="1" width="16" height="18"/></svg></button>
                <button class="narrow" aria-label="メニュー"><svg class="down"><use href="#down"/></svg></button>
                <button aria-label="全画面"><svg viewBox="0 0 18 18"><path d="M1.500 2.500h14v13h-14z" fill="#fff" stroke="#333"/><path d="M2 3h13v3H2z" fill="#7f8790"/></svg></button>
            </div>
            <svg class="grip" viewBox="0 0 12 12"><path d="M9 1h2v2H9zM5 5h2v2H5zM9 5h2v2H9zM1 9h2v2H1zM5 9h2v2H5zM9 9h2v2H9z" fill="#e5e5e5"/></svg>
        </div>
    </footer>
</body>
</html>
```

FILE: styles.css
```css
* {
    box-sizing: border-box;
}
body {
    margin: 0;
    height: 100vh;
    display: flex;
    flex-direction: column;
    overflow: hidden;
    background: #666;
    color: #222;
    font-family: "Liberation Sans", "Noto Sans CJK JP", sans-serif;
    font-size: 11px;
    font-feature-settings: "palt";
}
button, select, input {
    font: inherit;
    font-feature-settings: inherit;
    color: inherit;
    margin: 0;
    padding: 0;
    border: 0;
    background: none;
}
h1, h2, p, ul {
    margin: 0;
    padding: 0;
    font-weight: normal;
}
svg {
    display: block;
    flex: none;
}
select {
    appearance: none;
}
.icon-defs {
    position: absolute;
    width: 0;
    height: 0;
}
.down {
    width: 7px;
    height: 4px;
}

/* Ribbon */
.title-strip {
    height: 3px;
    background: #404040;
    display: grid;
    grid-template-columns: 507fr 97fr 505fr;
}
.title-strip span {
    grid-column: 2;
    background: #e8e8e8;
}
.ribbon {
    display: grid;
    grid-template-columns: 68fr 88fr 282fr 90fr 175fr 182fr 216fr;
    margin: 0 5px 4px 3px;
    background: #fff;
    border-bottom: 1px solid #fff;
}
.panel {
    min-width: 0;
    border-right: 1px solid #9b9b9b;
    display: flex;
    flex-direction: column;
}
.panel-body {
    flex: 1;
    display: flex;
    justify-content: center;
    gap: 3px;
    padding: 6px 1px 4px;
    min-height: 80px;
}
.panel h2 {
    position: relative;
    display: flex;
    align-items: center;
    justify-content: center;
    gap: 6px;
    height: 17px;
    margin: 0 1px;
    font-size: 11px;
    line-height: 15px;
    white-space: nowrap;
    background: #ececec;
}
.panel:first-child h2 {
    padding-right: 14px;
}
.launcher {
    position: absolute;
    right: 4px;
    bottom: 1px;
}
.launcher svg {
    width: 7px;
    height: 7px;
}
.big {
    display: flex;
    flex-direction: column;
    align-items: center;
    text-align: center;
    line-height: 13px;
    white-space: nowrap;
    min-width: 36px;
}
.big svg {
    width: 32px;
    height: 32px;
    margin: 1px 0 3px;
}
.wide .big {
    flex: 1;
}
.tight {
    gap: 1px;
}
.stack {
    display: flex;
    flex-direction: column;
    align-items: flex-start;
    gap: 2px;
}
.small {
    display: grid;
    place-items: center;
    width: 24px;
    height: 22px;
    border: 1px solid #d0d0d4;
    background: #f4f4f6;
}
.small svg {
    width: 18px;
    height: 18px;
}
.small.on {
    background: #b5d4f4;
    border-color: #3d72b0;
}
.small.off svg {
    opacity: 0.3;
    filter: grayscale(1);
}
.divider {
    width: 1px;
    margin: 0 3px;
    background: #cfcfcf;
}
.mini-select {
    display: flex;
    align-items: center;
    position: relative;
    width: 35px;
    height: 22px;
    border: 1px solid #d0d0d4;
    background: linear-gradient(90deg, #f4f4f6 22px, #d0d0d4 22px 23px, #f4f4f6 23px);
}
.mini-select select {
    width: 100%;
    height: 100%;
}
.mini-select .down {
    position: absolute;
    right: 3px;
    width: 5px;
    height: 3px;
}
.icon-grid {
    display: grid;
    grid-template-columns: repeat(3, 24px);
    grid-auto-rows: 22px;
    gap: 2px 0;
}
.panel-body.layers {
    flex-direction: column;
    justify-content: flex-start;
    padding: 18px 1px 4px;
}
.layer-row {
    display: flex;
    gap: 4px;
}
.layer-select {
    position: relative;
    flex: 1;
    display: flex;
    align-items: center;
    gap: 3px;
    padding-left: 3px;
    height: 22px;
    border: 1px solid #d0d0d4;
    background: linear-gradient(#fff, #eee);
}
.layer-select svg {
    width: 16px;
    height: 17px;
}
.layer-select .down {
    position: absolute;
    right: 2px;
    width: 7px;
    height: 4px;
}
.layer-select select {
    flex: 1;
    height: 18px;
    font-size: 12px;
}
.swatch {
    width: 15px;
    height: 15px;
    border: 1px solid #222;
    background: #fff;
}

/* Task pane */
.workspace {
    flex: 1;
    min-height: 0;
    display: flex;
}
.task-pane {
    display: flex;
    width: 300px;
    padding: 4px 0 3px;
}
.pane {
    flex: 1;
    display: flex;
    flex-direction: column;
    background: #a3a3a3;
    border-radius: 0 5px 5px 0;
}
.pane h1 {
    display: flex;
    align-items: center;
    gap: 5px;
    padding-left: 3px;
    font-size: 12px;
    line-height: 18px;
    font-weight: bold;
    color: #111;
}
.pane h1 i {
    width: 3px;
    height: 11px;
    background: repeating-linear-gradient(#555 0 1px, transparent 1px 2px);
}
.pane-body {
    flex: 1;
    display: flex;
    flex-direction: column;
    padding: 6px 11px 13px;
    background: #f0f0f0;
    border-radius: 5px 0 5px 5px;
    color: #111;
}
.map-field {
    display: flex;
    align-items: center;
    justify-content: space-between;
}
.map-field label {
    font-size: 10px;
}
.xp-select {
    position: relative;
    width: 202px;
    height: 20px;
    border: 1px solid #7f9db9;
    background: #fff;
}
.xp-select select {
    width: 100%;
    height: 18px;
    padding-left: 3px;
    font-size: 12px;
}
.xp-select span {
    position: absolute;
    right: 1px;
    top: 1px;
    display: grid;
    place-items: center;
    width: 15px;
    height: 16px;
    background: #c1d2fb;
    border: 1px solid #b0c4f0;
    border-radius: 2px;
    pointer-events: none;
}
.xp-select svg {
    width: 10px;
    height: 8px;
}
.pane-tools {
    display: flex;
    gap: 6px;
    height: 55px;
    margin-top: 10px;
    padding: 8px 4px 0;
    border: 1px solid #828282;
    background: linear-gradient(#999, #eee 4px, #fff 8px);
}
.pane-tools button {
    display: flex;
    flex-direction: column;
    align-items: center;
    gap: 2px;
    line-height: 13px;
    font-size: 10px;
}
.pane-tools button:disabled {
    color: #9a9a9a;
}
.pane-tools svg {
    width: 23px;
    height: 23px;
}
.pane-tools button:disabled svg {
    opacity: 0.4;
}
.view-tools {
    display: flex;
    align-items: center;
    gap: 3px;
    margin-top: 10px;
}
.view-tools span {
    width: 1px;
    height: 24px;
    margin-right: 7px;
    background: #a08c8c;
}
.view-tools button {
    display: grid;
    place-items: center;
    width: 25px;
    height: 28px;
}
.view-tools button.on {
    background: linear-gradient(#55aee8, #9bd5f7);
    border: 1px solid #6f8696;
}
.view-tools svg {
    width: 19px;
    height: 19px;
}
.layer-list {
    flex: 1;
    margin-top: 7px;
    padding-top: 2px;
    list-style: none;
    background: #fff;
    border: 1px solid #828282;
}
.layer-list li {
    display: grid;
    grid-template-columns: 22px 14px 57px 66px;
    column-gap: 5px;
    align-items: center;
    height: 29px;
    padding-left: 10px;
    font-size: 12px;
}
.layer-list input {
    appearance: none;
    grid-column: 2;
    width: 13px;
    height: 13px;
    background: linear-gradient(135deg, #dcdcd7, #fff);
    border: 1px solid #1c5180;
}
.layer-list input:checked::after {
    content: "";
    display: block;
    width: 4px;
    height: 7px;
    margin: 0 auto;
    border: solid #21a121;
    border-width: 0 2px 2px 0;
    transform: rotate(40deg);
}
.layer-list label {
    grid-column: 4;
    padding-left: 8px;
}
.layer-list .base {
    padding-left: 0;
    font-size: 11px;
    font-style: italic;
    white-space: nowrap;
}
.layer-list .child {
    grid-template-columns: 44px 14px 35px 66px;
}
.layer-list .child label {
    padding-left: 18px;
}
.toggle {
    padding-left: 5px;
}
.toggle svg {
    width: 12px;
    height: 7px;
}
.thumb {
    width: 55px;
    height: 16px;
}
.side-tabs {
    width: 14px;
    height: 440px;
    margin-top: 20px;
    display: grid;
    grid-auto-rows: 1fr;
}
.side-tabs button {
    background: #ccc;
    border: solid #555;
    border-width: 0 1px 1px 0;
    border-radius: 0 4px 4px 0;
    font-size: 11px;
    color: #111;
}
.side-tabs button.active {
    background: #f0f0f0;
}
.side-tabs span {
    display: block;
    writing-mode: vertical-rl;
    text-orientation: sideways;
    transform: rotate(180deg);
    line-height: 13px;
    margin: auto;
    white-space: nowrap;
}

/* Drawing window */
.editor {
    flex: 1;
    min-width: 0;
    display: flex;
    flex-direction: column;
    gap: 6px;
    padding: 2px 4px 1px 6px;
}
.drawing-window {
    flex: 1;
    min-height: 0;
    display: flex;
    flex-direction: column;
    border: 1px solid #96938a;
    background: #212830;
}
.canvas {
    position: relative;
    flex: 1;
    min-height: 0;
    padding: 7px 0 4px;
}
.map {
    width: 100%;
    height: 100%;
}
.sea {
    fill: #b9cfec;
}
.land {
    fill: #f6f2ef;
    stroke: #eadff0;
    stroke-width: 1;
    stroke-linejoin: round;
}
.border, .minor, .road, .ferry {
    fill: none;
    stroke-linejoin: round;
}
.border {
    stroke: #d9d4ce;
    stroke-width: 1.5;
}
.minor {
    stroke: #dccbe8;
    stroke-width: 1.5;
}
.road {
    stroke: #abc99c;
    stroke-width: 2;
}
.ferry {
    stroke: #6d87ac;
    stroke-dasharray: 2 4;
}
.town {
    fill: #666;
}
.city {
    font: 16px "Noto Sans", sans-serif;
    fill: #1c1c1c;
    stroke: #ffffff99;
    stroke-width: 2;
    paint-order: stroke;
}
.prefecture {
    font: small-caps 20px "Noto Sans", sans-serif;
    fill: #8d8f94;
}
.lake {
    font: italic 12px "Noto Sans", sans-serif;
    fill: #66788f;
}
.view-label {
    position: absolute;
    left: 5px;
    top: 4px;
    font-size: 12px;
    line-height: 17px;
    color: #fff;
}
.window-buttons {
    position: absolute;
    top: 9px;
    right: 9px;
    display: flex;
    gap: 8px;
}
.window-buttons svg {
    width: 12px;
    height: 12px;
}
.compass {
    position: absolute;
    top: 32px;
    right: 8px;
    width: 80px;
    height: 80px;
    color: #b9bcc0;
}
.compass span {
    position: absolute;
    line-height: 12px;
}
.compass .north {
    top: 1px;
    left: 35px;
}
.compass .east {
    top: 34px;
    right: 2px;
}
.compass .south {
    bottom: 1px;
    left: 35px;
}
.compass .west {
    top: 34px;
    left: 2px;
}
.compass button {
    position: absolute;
    left: 25px;
    top: 25px;
    width: 30px;
    height: 30px;
    background: #a5a7aa;
    border: 1px solid #b8babd;
    font-size: 17px;
    line-height: 28px;
    color: #41454b;
}
.ucs-name {
    position: absolute;
    top: 123px;
    right: 18px;
    display: flex;
    align-items: center;
    justify-content: center;
    gap: 7px;
    width: 61px;
    height: 17px;
    font-size: 10px;
    line-height: 15px;
    background: #8b8d94;
    border: 1px solid #a2a4a9;
    border-radius: 4px;
    color: #e0e0e2;
}
.ucs-name svg {
    width: 8px;
    height: 6px;
}
.nav-bar {
    position: absolute;
    top: 165px;
    right: 2px;
    width: 33px;
    background: #5d6269;
    border: 1px solid #686d74;
    border-radius: 4px;
}
.ucs-icon {
    position: absolute;
    left: 7px;
    bottom: 8px;
    width: 80px;
    height: 76px;
    overflow: visible;
}
.ucs-icon text {
    font: 300 17px Roboto, sans-serif;
    fill: #fff;
}
.layout-tabs {
    display: flex;
    height: 15px;
    background: #ece9d8;
    color: #111;
}
.step {
    display: grid;
    place-items: center;
    width: 14px;
    border: solid #b9b7a6;
    border-width: 0 1px 1px 0;
}
.step svg {
    width: 10px;
    height: 10px;
}
.sheet {
    padding: 0 5px;
    font-size: 10px;
    line-height: 14px;
}
.sheet.active {
    padding: 0 10px;
    background: #212830;
    color: #fff;
    clip-path: polygon(0 0, 100% 0, 88% 100%, 12% 100%);
}
.slant {
    width: 8px;
    height: 15px;
}

/* Command window */
.command {
    display: flex;
    background: #c8c8c8;
}
.command-side {
    display: flex;
    flex-direction: column;
    align-items: center;
    gap: 10px;
    width: 23px;
    padding-top: 3px;
    background: linear-gradient(#8a8a8a, #3c3c3c);
}
.command-side i {
    width: 17px;
    height: 5px;
    margin-bottom: -4px;
    background: repeating-linear-gradient(90deg, #aaa 0 2px, transparent 2px 3px);
}
.command-side svg {
    width: 13px;
    height: 13px;
}
.command-main {
    flex: 1;
    min-width: 0;
}
.history {
    padding: 8px 2px 3px;
    font-family: "Noto Sans CJK JP", sans-serif;
    font-size: 14px;
    font-feature-settings: "hwid";
    line-height: 16px;
    white-space: nowrap;
    overflow: hidden;
    color: #111;
}
.prompt {
    display: flex;
    align-items: center;
    height: 23px;
    padding-left: 5px;
    gap: 6px;
    background: #fff;
}
.prompt button {
    display: flex;
    align-items: center;
    gap: 3px;
}
.prompt svg {
    width: 16px;
    height: 13px;
}
.prompt .down {
    width: 6px;
    height: 4px;
    opacity: 0.6;
}
.prompt input {
    flex: 1;
    font-family: "Noto Sans CJK JP", sans-serif;
    font-size: 13px;
    font-feature-settings: normal;
    line-height: 18px;
}
.prompt input::placeholder {
    color: #8e8e8e;
}

/* Status bar */
.status {
    display: flex;
    align-items: center;
    height: 25px;
    padding: 0 3px 0 11px;
    border-top: 1px solid #222;
    background: linear-gradient(#909090, #6c6c6c);
    color: #111;
}
.coords {
    width: 174px;
    white-space: nowrap;
}
.status-group {
    display: flex;
}
.status button {
    display: flex;
    align-items: center;
    justify-content: center;
    width: 22px;
    height: 22px;
    background: linear-gradient(#b8b8b8, #969696);
    border: solid #777;
    border-width: 0 1px 0 0;
    box-shadow: inset 1px 0 #c6c6c6;
}
.status button svg {
    width: 18px;
    height: 18px;
}
.status button.on {
    background: linear-gradient(#d7f1fb, #9bd2e8);
}
.status button.text {
    width: auto;
    padding: 0 2px;
    gap: 2px;
    font-size: 10px;
    white-space: nowrap;
}
.status button .down {
    width: 7px;
    height: 5px;
}
.status button.pressed {
    width: 27px;
    margin: 0 4px;
    background: #6d6a62;
    border: 1px solid #444;
}
.status button.narrow {
    width: 13px;
}
.status-right {
    display: flex;
    align-items: center;
    gap: 6px;
    margin-left: auto;
}
.status-group.scale {
    margin-left: 4px;
}
.grip {
    width: 12px;
    height: 12px;
    align-self: flex-end;
}
```
